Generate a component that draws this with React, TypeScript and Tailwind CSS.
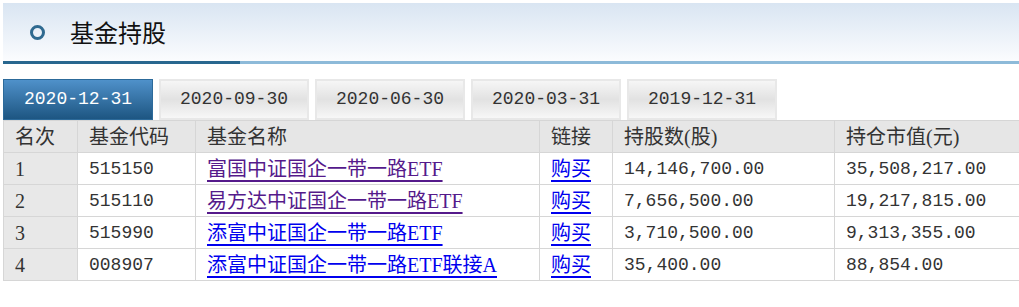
const dates = ["2020-12-31", "2020-09-30", "2020-06-30", "2020-03-31", "2019-12-31"]

interface Holding {
  rank: number
  code: string
  name: string
  visited: boolean
  shares: string
  value: string
}

const holdings: Holding[] = [
  { rank: 1, code: "515150", name: "富国中证国企一带一路ETF", visited: true, shares: "14,146,700.00", value: "35,508,217.00" },
  { rank: 2, code: "515110", name: "易方达中证国企一带一路ETF", visited: true, shares: "7,656,500.00", value: "19,217,815.00" },
  { rank: 3, code: "515990", name: "添富中证国企一带一路ETF", visited: false, shares: "3,710,500.00", value: "9,313,355.00" },
  { rank: 4, code: "008907", name: "添富中证国企一带一路ETF联接A", visited: false, shares: "35,400.00", value: "88,854.00" },
]

const cjk = "font-['Liberation_Serif','Noto_Sans_CJK_SC',serif] text-[20px]"
const mono = "font-['Liberation_Mono','Noto_Sans_CJK_SC',monospace] text-[18px]"
const cell = "border border-[#d6d6d6] pl-[11px] h-[32px] p-0 leading-none text-left font-normal"

export default function App() {
  return (
    <div className="bg-white pl-[3px] pt-[3px] text-[#333] w-[1019px] h-[307px] overflow-hidden">
      {/* Panel title */}
      <div className="h-[58px] bg-gradient-to-b from-[#d9e5f2] to-[#fbfcfe] flex items-center">
        <div className="ml-[27px] shrink-0 w-[15px] h-[15px] rounded-full border-[3px] border-[#2f6a90]" />
        <h2 className="ml-[25px] text-[24px] leading-none text-[#111] font-['Noto_Sans_CJK_SC',sans-serif]">基金持股</h2>
      </div>
      <div className="flex h-[3px]">
        <div className="w-[237px] bg-[#28678f]" />
        <div className="flex-1 bg-[#8dbad9]" />
      </div>

      {/* Date tabs */}
      <div className="mt-[15px] flex gap-[6px] h-[41px]">
        {dates.map((d, i) =>
          i === 0 ? (
            <div
              key={d}
              className={`w-[150px] flex items-center justify-center border border-[#2c6a9a] bg-gradient-to-b from-[#4f91ca] to-[#1d5682] text-white ${mono}`}
            >
              {d}
            </div>
          ) : (
            <div
              key={d}
              className={`w-[150px] flex items-center justify-center border-2 border-[#e8e8e8] bg-gradient-to-b from-[#f6f6f6] via-[#e2e2e2] to-[#f7f7f7] text-[#333] ${mono}`}
            >
              {d}
            </div>
          )
        )}
      </div>

      {/* Holdings table */}
      <table className="table-fixed border-collapse w-[1016px]">
        <colgroup>
          <col className="w-[74px]" />
          <col className="w-[118px]" />
          <col className="w-[344px]" />
          <col className="w-[73px]" />
          <col className="w-[222px]" />
          <col className="w-[185px]" />
        </colgroup>
        <thead>
          <tr className={`bg-[#e6e6e6] ${cjk}`}>
            <th className={cell}>名次</th>
            <th className={cell}>基金代码</th>
            <th className={cell}>基金名称</th>
            <th className={cell}>链接</th>
            <th className={cell}>持股数(股)</th>
            <th className={cell}>持仓市值(元)</th>
          </tr>
        </thead>
        <tbody>
          {holdings.map((h) => {
            const link = h.visited ? "text-[#551a8b] decoration-[#551a8b]" : "text-[#0000ee] decoration-[#0000ee]"
            return (
              <tr key={h.rank}>
                <td className={`${cell} bg-[#e8e8e8] ${cjk}`}>{h.rank}</td>
                <td className={`${cell} ${mono}`}>{h.code}</td>
                <td className={`${cell} ${cjk}`}>
                  <a href="#" className={`underline decoration-2 underline-offset-4 ${link}`}>
                    {h.name}
                  </a>
                </td>
                <td className={`${cell} ${cjk}`}>
                  <a href="#" className="underline decoration-2 underline-offset-4 text-[#0000ee] decoration-[#0000ee]">
                    购买
                  </a>
                </td>
                <td className={`${cell} ${mono}`}>{h.shares}</td>
                <td className={`${cell} ${mono}`}>{h.value}</td>
              </tr>
            )
          })}
        </tbody>
      </table>
    </div>
  )
}
